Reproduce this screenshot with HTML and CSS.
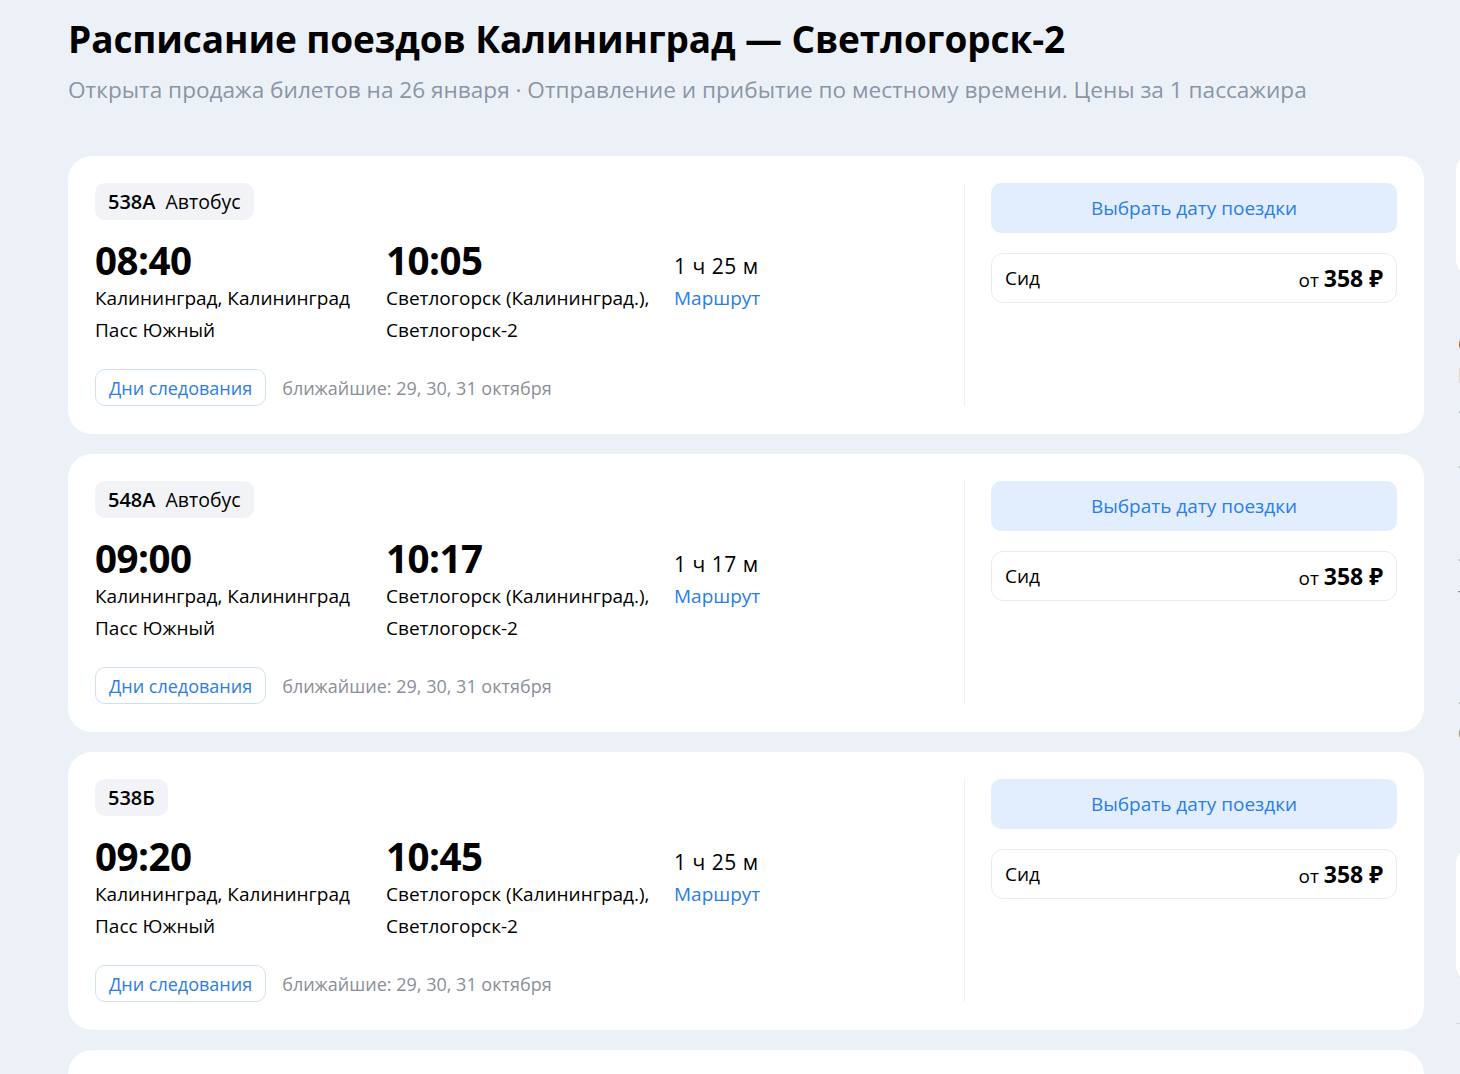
FILE: index.html
```html
<!DOCTYPE html>
<html lang="ru">
<head>
  <meta charset="UTF-8" />
  <meta name="viewport" content="width=device-width, initial-scale=1.0"/>
  <title>Расписание поездов Калининград — Светлогорск-2</title>
  <link rel="stylesheet" href="styles.css">
</head>
<body>
  <div class="page">
    <main class="content">
      <h1 class="title">Расписание поездов Калининград — Светлогорск-2</h1>
      <p class="subtitle">Открыта продажа билетов на 26 января · Отправление и прибытие по местному времени. Цены за 1 пассажира</p>

      <div class="list">
        <!-- 538А -->
        <div class="trip">
          <div class="trip-info">
            <div class="badge"><b>538А</b> Автобус</div>
            <div class="times">
              <div class="time">08:40</div>
              <div class="time">10:05</div>
              <div class="duration">1 ч 25 м</div>
              <div class="station">Калининград, Калининград<br>Пасс Южный</div>
              <div class="station">Светлогорск (Калининград.),<br>Светлогорск-2</div>
              <a class="route" href="#">Маршрут</a>
            </div>
            <div class="days">
              <button class="days-btn">Дни следования</button>
              <span class="days-near">ближайшие: 29, 30, 31 октября</span>
            </div>
          </div>
          <div class="trip-buy">
            <button class="date-btn">Выбрать дату поездки</button>
            <div class="price">
              <span>Сид</span>
              <span class="price-val">от <b>358 ₽</b></span>
            </div>
          </div>
        </div>

        <!-- 548А -->
        <div class="trip">
          <div class="trip-info">
            <div class="badge"><b>548А</b> Автобус</div>
            <div class="times">
              <div class="time">09:00</div>
              <div class="time">10:17</div>
              <div class="duration">1 ч 17 м</div>
              <div class="station">Калининград, Калининград<br>Пасс Южный</div>
              <div class="station">Светлогорск (Калининград.),<br>Светлогорск-2</div>
              <a class="route" href="#">Маршрут</a>
            </div>
            <div class="days">
              <button class="days-btn">Дни следования</button>
              <span class="days-near">ближайшие: 29, 30, 31 октября</span>
            </div>
          </div>
          <div class="trip-buy">
            <button class="date-btn">Выбрать дату поездки</button>
            <div class="price">
              <span>Сид</span>
              <span class="price-val">от <b>358 ₽</b></span>
            </div>
          </div>
        </div>

        <!-- 538Б -->
        <div class="trip">
          <div class="trip-info">
            <div class="badge"><b>538Б</b></div>
            <div class="times">
              <div class="time">09:20</div>
              <div class="time">10:45</div>
              <div class="duration">1 ч 25 м</div>
              <div class="station">Калининград, Калининград<br>Пасс Южный</div>
              <div class="station">Светлогорск (Калининград.),<br>Светлогорск-2</div>
              <a class="route" href="#">Маршрут</a>
            </div>
            <div class="days">
              <button class="days-btn">Дни следования</button>
              <span class="days-near">ближайшие: 29, 30, 31 октября</span>
            </div>
          </div>
          <div class="trip-buy">
            <button class="date-btn">Выбрать дату поездки</button>
            <div class="price">
              <span>Сид</span>
              <span class="price-val">от <b>358 ₽</b></span>
            </div>
          </div>
        </div>

        <div class="trip trip-next"></div>
      </div>
    </main>

    <!-- right column, mostly off screen -->
    <aside class="side">
      <div class="side-card"></div>
      <p class="side-head">Остановки<br>Расписание</p>
      <p class="side-note">· 29 октября</p>
      <p class="side-note side-gap">· 30 октября</p>
      <p class="side-note side-gap-lg">· 31 октября</p>
      <p class="side-link">Туда</p>
      <p class="side-note side-gap-xl">· 1 ноября</p>
      <p class="side-link side-tight">Обратно</p>
      <div class="side-card side-card-low"></div>
      <div class="side-rule"></div>
    </aside>
  </div>
</body>
</html>
```

FILE: styles.css
```css
* {
  box-sizing: border-box;
}

body {
  margin: 0;
  background: #ecf1f8;
  color: #000;
  font-family: 'Open Sans', 'Noto Sans', sans-serif;
  overflow: hidden;
  height: 1074px;
}

.page {
  display: flex;
  gap: 32px;
  padding: 17px 0 0 68px;
}

.content {
  width: 1356px;
  flex-shrink: 0;
}

.title {
  margin: 0;
  font-size: 37px;
  line-height: 44px;
  font-weight: 700;
  letter-spacing: -0.1px;
}

.subtitle {
  margin: 14px 0 0;
  font-size: 22.6px;
  line-height: 30px;
  color: #8b95a4;
}

.list {
  display: flex;
  flex-direction: column;
  gap: 20.5px;
  margin-top: 51px;
}

.trip {
  display: flex;
  background: #fff;
  border-radius: 24px;
  padding: 27px 27px 27.5px;
}

.trip-next {
  height: 60px;
}

.trip-info {
  flex: 1;
}

.badge {
  display: inline-flex;
  align-items: center;
  gap: 10px;
  height: 37px;
  padding: 0 13px;
  border-radius: 10px;
  background: #f1f3f6;
  font-size: 19.5px;
}

.badge b {
  font-weight: 600;
  font-size: 20px;
}

.times {
  display: grid;
  grid-template-columns: 291px 288px auto;
  margin-top: 18px;
}

.time {
  font-size: 38.5px;
  line-height: 44px;
  font-weight: 700;
  letter-spacing: -0.5px;
}

.duration {
  align-self: end;
  font-size: 21px;
  line-height: 28px;
  margin-bottom: 2px;
  letter-spacing: 0.5px;
}

.station {
  font-size: 19px;
  line-height: 32px;
  white-space: nowrap;
}

.route {
  font-size: 19px;
  line-height: 32px;
  color: #2b7de6;
  text-decoration: none;
  align-self: start;
}

.days {
  display: flex;
  align-items: center;
  gap: 16px;
  margin-top: 23px;
}

.days-btn {
  height: 37px;
  padding: 0 13px;
  border: 1px solid #cfe0f6;
  border-radius: 10px;
  background: #fff;
  color: #2b7de6;
  font-family: inherit;
  font-size: 18px;
}

.days-near {
  font-size: 18px;
  color: #8a8f98;
}

.trip-buy {
  width: 433px;
  padding-left: 26px;
  border-left: 1px solid #eceff3;
  display: flex;
  flex-direction: column;
  gap: 20px;
}

.date-btn {
  height: 50px;
  border: none;
  border-radius: 10px;
  background: #e2eefd;
  color: #2b7de6;
  font-family: inherit;
  font-size: 19px;
}

.price {
  display: flex;
  justify-content: space-between;
  align-items: center;
  height: 50px;
  padding: 0 13px;
  border: 1px solid #e7eaef;
  border-radius: 12px;
  font-size: 19px;
}

.price-val b {
  font-size: 23px;
  font-weight: 700;
}

.side {
  width: 300px;
  flex-shrink: 0;
  padding-top: 137px;
}

.side-card {
  height: 122px;
  background: #fff;
  border-radius: 16px;
}

.side-head {
  margin: 52px 0 0 2px;
  font-size: 22px;
  line-height: 31px;
  font-weight: 700;
  color: #3a2a1c;
}

.side-note {
  margin: 7px 0 0 2px;
  font-size: 14px;
  line-height: 30px;
  color: #a3aab5;
}

.side-gap {
  margin-top: 25px;
}

.side-gap-lg {
  margin-top: 63px;
}

.side-gap-xl {
  margin-top: 76px;
}

.side-link {
  margin: 7px 0 0 2px;
  font-size: 18px;
  line-height: 30px;
  color: #7a8290;
}

.side-tight {
  margin-top: 0;
}

.side-card-low {
  height: 136px;
  margin-top: 99px;
  border-bottom: 1px solid #d5dae2;
}

.side-rule {
  margin-top: 40px;
  border-top: 1px solid #d5dae2;
}
```
